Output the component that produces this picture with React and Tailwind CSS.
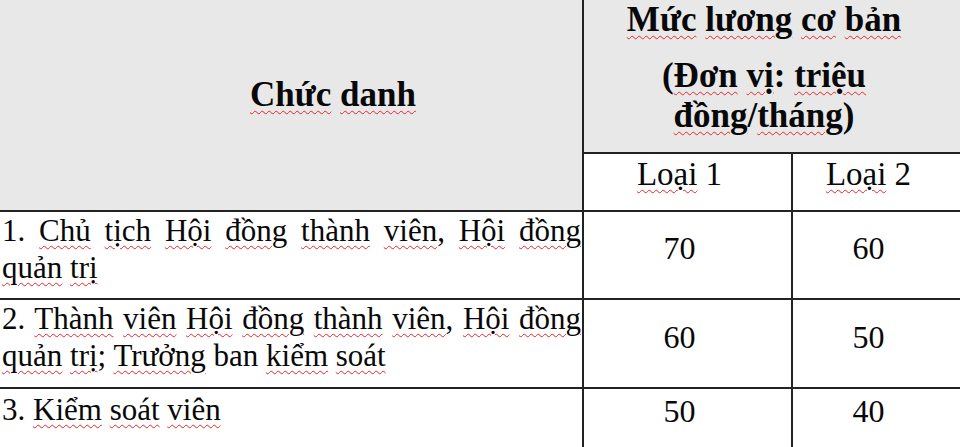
const spell = "underline decoration-wavy decoration-[#e8242b] decoration-1 underline-offset-[4px]";

// marks every word with Word's red squiggle, except the ones in skip
function Spell({ text, skip = [] }) {
  const parts = text.split(/(\p{L}+)/u);
  return parts.map((part, i) =>
    i % 2 === 1 && !skip.includes(part) ? (
      <span key={i} className={spell}>
        {part}
      </span>
    ) : (
      part
    )
  );
}

const rows = [
  {
    title: "1. Chủ tịch Hội đồng thành viên, Hội đồng quản trị",
    a: "70",
    b: "60",
    textPad: "pt-0",
    numPad: "pt-[17px]",
  },
  {
    title: "2. Thành viên Hội đồng thành viên, Hội đồng quản trị; Trưởng ban kiểm soát",
    a: "60",
    b: "50",
    textPad: "pt-0",
    numPad: "pt-[18px]",
  },
  {
    title: "3. Kiểm soát viên",
    a: "50",
    b: "40",
    textPad: "pt-[2px]",
    numPad: "pt-[3px]",
  },
];

export default function App() {
  return (
    <div className="w-[960px] h-[447px] overflow-hidden bg-white font-['Liberation_Serif','Times_New_Roman',serif] text-[#080808]">
      <div className="grid h-full grid-cols-[582px_207px_1fr] grid-rows-[152px_56px_86px_87px_1fr] gap-[2px] bg-[#222222]">
        <div className="row-span-2 bg-[#e8e8e8] pt-[75px] pl-[250px] text-[35px] font-bold leading-[40px]">
          <Spell text="Chức danh" />
        </div>
        <div className="col-span-2 bg-[#e8e8e8] pr-4 text-center text-[35px] font-bold leading-[40px]">
          <p>
            <Spell text="Mức lương cơ bản" />
          </p>
          <p className="mt-4">
            <Spell text="(Đơn vị: triệu đồng/tháng)" />
          </p>
        </div>

        <div className="bg-white pt-px pr-4 text-center text-[33px] leading-[38px]">
          <Spell text="Loại 1" />
        </div>
        <div className="bg-white pt-px pr-4 text-center text-[33px] leading-[38px]">
          <Spell text="Loại 2" />
        </div>

        {rows.map((row) => (
          <div key={row.title} className="contents">
            <div className={`bg-white pl-[2px] pr-px text-justify text-[31px] leading-[37px] ${row.textPad}`}>
              <Spell text={row.title} skip={["ban"]} />
            </div>
            <div className={`bg-white pr-4 text-center text-[32px] leading-[38px] ${row.numPad}`}>{row.a}</div>
            <div className={`bg-white pr-4 text-center text-[32px] leading-[38px] ${row.numPad}`}>{row.b}</div>
          </div>
        ))}
      </div>
    </div>
  );
}
